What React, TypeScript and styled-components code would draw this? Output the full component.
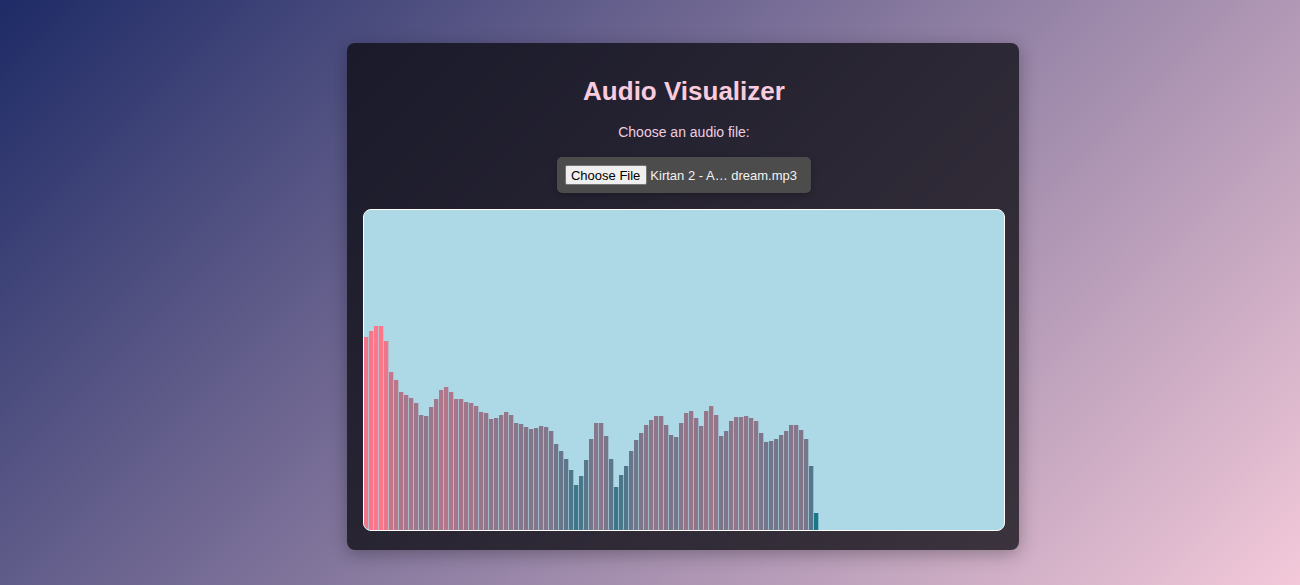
import React from "react";
import styled, { createGlobalStyle } from "styled-components";

const GlobalStyle = createGlobalStyle`
  html, body {
    margin: 0;
    padding: 0;
  }
  body {
    min-height: 100vh;
    background: linear-gradient(135deg, #1e2b66 0%, #f3c9d9 100%);
    font-family: "Liberation Sans", Arial, sans-serif;
  }
`;

const Page = styled.div`
  display: flex;
  justify-content: center;
  align-items: flex-start;
  box-sizing: border-box;
  width: 1300px;
  height: 585px;
  padding: 43px 0 0 66px;
`;

const Card = styled.div`
  width: 672px;
  box-sizing: border-box;
  padding: 33px 14px 19px 16px;
  background: rgba(10, 10, 15, 0.75);
  border-radius: 8px;
  box-shadow: 0 4px 18px rgba(0, 0, 0, 0.3);
  display: flex;
  flex-direction: column;
  align-items: center;
`;

const Title = styled.h1`
  margin: 0;
  font-size: 26px;
  line-height: 30px;
  font-weight: 700;
  color: #f9cbdf;
`;

const Prompt = styled.label`
  margin-top: 18px;
  font-size: 14px;
  line-height: 16px;
  color: #f0cde0;
`;

const FileBox = styled.div`
  margin-top: 17px;
  display: flex;
  align-items: center;
  padding: 8px;
  background: #4c4c4c;
  border-radius: 5px;
  box-shadow: 0 2px 6px rgba(0, 0, 0, 0.25);
`;

const FileButton = styled.span`
  display: inline-flex;
  align-items: center;
  height: 20px;
  box-sizing: border-box;
  padding: 0 6px 0 5px;
  background: #efefef;
  border: 1px solid #767676;
  border-radius: 2px;
  color: #000;
  font-size: 13px;
  margin-right: 3px;
`;

const FileName = styled.span`
  font-size: 13px;
  color: #f2f2f2;
  white-space: nowrap;
  padding-right: 6px;
`;

const CanvasFrame = styled.div`
  margin-top: 16px;
  width: 640px;
  height: 320px;
  border: 1px solid #ffffff;
  border-radius: 8px;
  overflow: hidden;
  background: #add8e6;
  line-height: 0;
`;

const heights = [
  193, 199, 204, 204, 189, 158, 150, 138, 135, 132, 127, 115, 114, 123, 131,
  140, 143, 138, 131, 131, 128, 127, 124, 118, 117, 111, 112, 115, 118, 115,
  107, 106, 103, 101, 102, 104, 103, 99, 86, 79, 71, 60, 45, 54, 70, 91, 107,
  107, 94, 71, 43, 55, 64, 79, 90, 97, 105, 110, 114, 114, 105, 95, 93, 107,
  117, 119, 112, 104, 119, 124, 115, 94, 99, 109, 113, 113, 114, 112, 109, 97,
  88, 89, 91, 95, 99, 105, 105, 100, 91, 64, 17,
];

const barColor = (h: number) => {
  const r = Math.min(255, Math.round(1.2 * h + 8));
  return `rgb(${r}, 118, 138)`;
};

const Visualizer: React.FC = () => (
  <svg width={640} height={320} viewBox="0 0 640 320">
    {heights.map((h, i) => (
      <rect
        key={i}
        x={i * 5}
        y={320 - h}
        width={4.3}
        height={h}
        fill={barColor(h)}
      />
    ))}
  </svg>
);

export default function App() {
  return (
    <>
      <GlobalStyle />
      <Page>
        <Card>
          <Title>Audio Visualizer</Title>
          <Prompt>Choose an audio file:</Prompt>
          <FileBox>
            <FileButton>Choose File</FileButton>
            <FileName>Kirtan 2 - A… dream.mp3</FileName>
          </FileBox>
          <CanvasFrame>
            <Visualizer />
          </CanvasFrame>
        </Card>
      </Page>
    </>
  );
}
